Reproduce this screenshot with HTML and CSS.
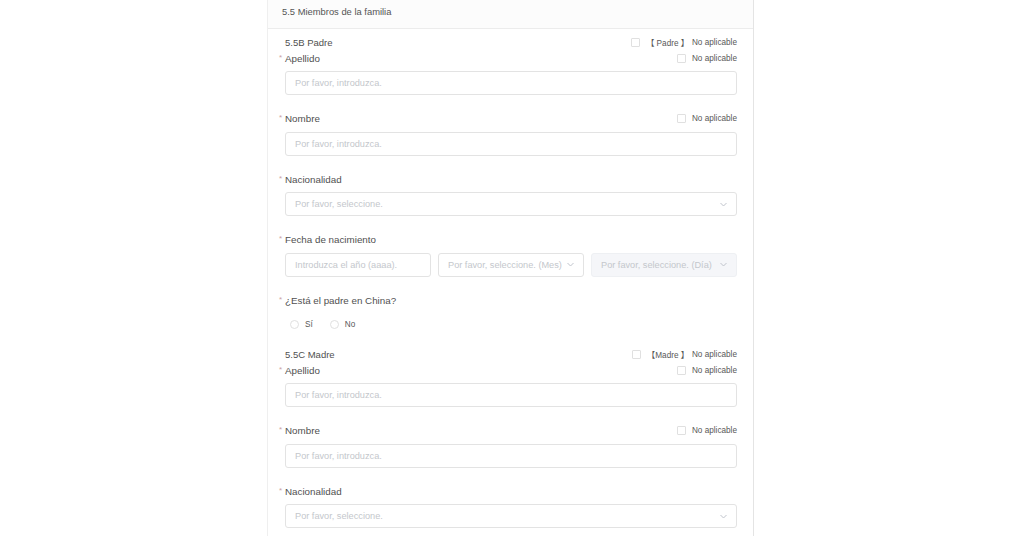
FILE: index.html
```html
<html>
<head>
    <title>Miembros de la familia</title>
    <link rel="stylesheet" href="styles.css">
</head>
<body>
    <div class="panel">
        <div class="panel-header">5.5 Miembros de la familia</div>

        <div class="panel-body">
            <!-- Padre -->
            <div class="section-head">
                <span>5.5B Padre</span>
                <label class="check"><span class="box"></span><span class="bracket">【 Padre 】</span>No aplicable</label>
            </div>

            <div class="item">
                <div class="item-label">
                    <span class="required">Apellido</span>
                    <label class="check"><span class="box"></span>No aplicable</label>
                </div>
                <div class="field">Por favor, introduzca.</div>
            </div>

            <div class="item">
                <div class="item-label">
                    <span class="required">Nombre</span>
                    <label class="check"><span class="box"></span>No aplicable</label>
                </div>
                <div class="field">Por favor, introduzca.</div>
            </div>

            <div class="item">
                <div class="item-label">
                    <span class="required">Nacionalidad</span>
                </div>
                <div class="field select">
                    <span>Por favor, seleccione.</span>
                    <svg class="chevron" width="7" height="5" viewBox="0 0 7 5"><polyline points="0.5,1 3.5,4 6.5,1" fill="none" stroke="#c0c4cc" stroke-width="1"/></svg>
                </div>
            </div>

            <div class="item">
                <div class="item-label">
                    <span class="required">Fecha de nacimiento</span>
                </div>
                <div class="date-row">
                    <div class="field">Introduzca el año (aaaa).</div>
                    <div class="field select">
                        <span>Por favor, seleccione. (Mes)</span>
                        <svg class="chevron" width="7" height="5" viewBox="0 0 7 5"><polyline points="0.5,1 3.5,4 6.5,1" fill="none" stroke="#c0c4cc" stroke-width="1"/></svg>
                    </div>
                    <div class="field select disabled">
                        <span>Por favor, seleccione. (Día)</span>
                        <svg class="chevron" width="7" height="5" viewBox="0 0 7 5"><polyline points="0.5,1 3.5,4 6.5,1" fill="none" stroke="#c0c4cc" stroke-width="1"/></svg>
                    </div>
                </div>
            </div>

            <div class="item item-radio">
                <div class="item-label">
                    <span class="required">¿Está el padre en China?</span>
                </div>
                <div class="radio-row">
                    <label class="radio"><span class="circle"></span>Sí</label>
                    <label class="radio"><span class="circle"></span>No</label>
                </div>
            </div>

            <!-- Madre -->
            <div class="section-head">
                <span>5.5C Madre</span>
                <label class="check"><span class="box"></span><span class="bracket">【Madre 】</span>No aplicable</label>
            </div>

            <div class="item">
                <div class="item-label">
                    <span class="required">Apellido</span>
                    <label class="check"><span class="box"></span>No aplicable</label>
                </div>
                <div class="field">Por favor, introduzca.</div>
            </div>

            <div class="item">
                <div class="item-label">
                    <span class="required">Nombre</span>
                    <label class="check"><span class="box"></span>No aplicable</label>
                </div>
                <div class="field">Por favor, introduzca.</div>
            </div>

            <div class="item">
                <div class="item-label">
                    <span class="required">Nacionalidad</span>
                </div>
                <div class="field select">
                    <span>Por favor, seleccione.</span>
                    <svg class="chevron" width="7" height="5" viewBox="0 0 7 5"><polyline points="0.5,1 3.5,4 6.5,1" fill="none" stroke="#c0c4cc" stroke-width="1"/></svg>
                </div>
            </div>
        </div>
    </div>
</body>
</html>
```

FILE: styles.css
```css
html, body {
    margin: 0;
    height: 100vh;
    overflow: hidden;
    background-color: #ffffff;
}

body {
    font-family: "Liberation Sans", Arial, "Noto Sans CJK SC", sans-serif;
    color: #505050;
}

.panel {
    width: 487px;
    margin-left: 267px;
    border-left: 1px solid #efefef;
    border-right: 1px solid #e4e4e4;
    box-sizing: border-box;
    min-height: 100vh;
}

.panel-header {
    height: 29px;
    box-sizing: border-box;
    padding: 4px 14px 0;
    line-height: 16px;
    font-size: 9.4px;
    color: #555;
    background-color: #fcfcfc;
    border-bottom: 1px solid #ececec;
}

.panel-body {
    padding: 5px 16px 0 17px;
}

.section-head {
    display: flex;
    justify-content: space-between;
    align-items: center;
    height: 16px;
    font-size: 9.5px;
    color: #505050;
}

.item {
    margin-bottom: 15.5px;
}

.item-label {
    display: flex;
    justify-content: space-between;
    align-items: center;
    height: 16px;
    margin-bottom: 5px;
    font-size: 9.8px;
}

.required::before {
    content: "*";
    color: #c9a3a3;
    font-size: 8px;
    display: inline-block;
    width: 6px;
    margin-left: -6px;
    vertical-align: 2px;
}

.check {
    display: flex;
    align-items: center;
    font-size: 8.2px;
    color: #585858;
}

.box {
    width: 7px;
    height: 7px;
    border: 1px solid #e0e0e0;
    border-radius: 1px;
    margin-right: 6px;
    background: #fff;
}

.bracket {
    margin-right: 3px;
}

.field {
    height: 24px;
    box-sizing: border-box;
    border: 1px solid #e3e3e3;
    border-radius: 3px;
    padding: 0 9px;
    line-height: 22px;
    font-size: 9.2px;
    color: #c4c7cc;
    background: #fff;
    white-space: nowrap;
    overflow: hidden;
}

.select {
    display: flex;
    justify-content: space-between;
    align-items: center;
}

.chevron {
    flex-shrink: 0;
}

.disabled {
    background-color: #f5f6f9;
    border-color: #eef0f3;
}

.date-row {
    display: grid;
    grid-template-columns: 1fr 1fr 1fr;
    gap: 7px;
}

.item-radio {
    margin-bottom: 14px;
}

.item-radio .item-label {
    margin-bottom: 8px;
}

.radio-row {
    display: flex;
    align-items: center;
    height: 16px;
    padding-left: 5px;
    gap: 17px;
    font-size: 8.2px;
    color: #585858;
}

.radio {
    display: flex;
    align-items: center;
}

.circle {
    width: 7px;
    height: 7px;
    border: 1px solid #e0e0e0;
    border-radius: 50%;
    margin-right: 6px;
}
```
